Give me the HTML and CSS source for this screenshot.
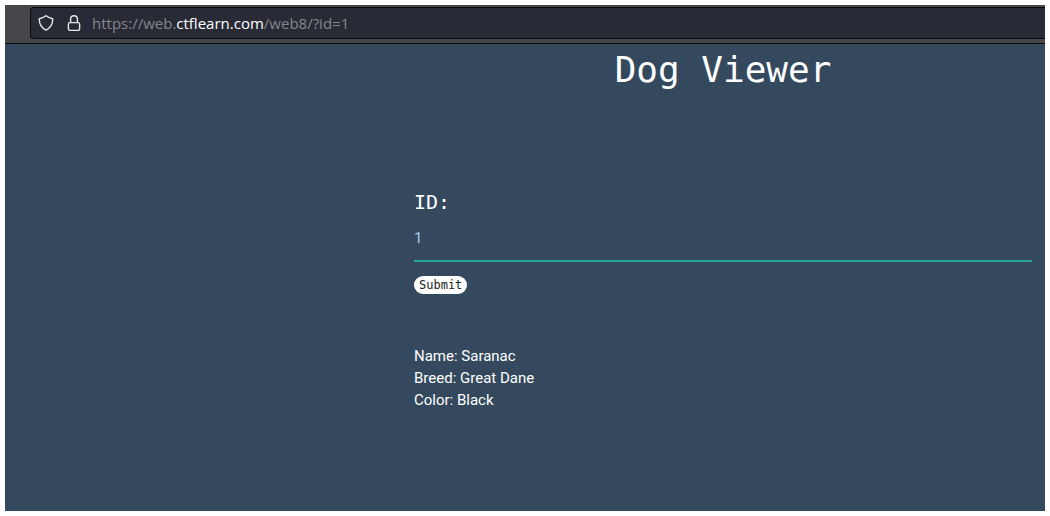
FILE: index.html
```
<!DOCTYPE html>
<html lang="en">
<head>
<meta charset="utf-8">
<title>Dog Viewer</title>
<link rel="stylesheet" href="styles.css">
</head>
<body>
<div class="window">
  <header class="toolbar">
    <div class="address-bar">
      <svg class="icon" viewBox="0 0 16 16" aria-hidden="true"><path d="M8 0.8C6.2 2.1 3.8 3.3 1.3 3.7C1.1 8.9 3.3 12.8 8 15.2C12.7 12.8 14.9 8.9 14.7 3.7C12.2 3.3 9.8 2.1 8 0.8Z"/></svg>
      <svg class="icon" viewBox="0 0 16 16" aria-hidden="true"><rect x="2.4" y="7.6" width="11.2" height="7.8" rx="1.6"/><path d="M4.6 7.6V4.1a3.4 3.4 0 0 1 6.8 0V7.6"/></svg>
      <div class="url">https://web.<span class="domain">ctflearn.com</span>/web8/?id=1</div>
    </div>
  </header>
  <main class="page">
    <div class="content">
      <h1 class="title">Dog Viewer</h1>
      <form class="form">
        <label class="label" for="dog-id">ID:</label>
        <input class="field" id="dog-id" name="id" type="text" value="1">
        <button class="submit" type="submit">Submit</button>
      </form>
      <div class="result">
        <div>Name: Saranac</div>
        <div>Breed: Great Dane</div>
        <div>Color: Black</div>
      </div>
    </div>
  </main>
</div>
</body>
</html>
```
FILE: styles.css
```
* {
  box-sizing: border-box;
}

body {
  margin: 0;
  padding: 5px;
  background: #fff;
  font-family: Roboto, sans-serif;
}

.window {
  display: flex;
  flex-direction: column;
  min-height: calc(100vh - 10px);
  background: #34495e;
  color: #fff;
}

.toolbar {
  padding: 2px 0 4px 25px;
  background: #45474c;
  border-bottom: 1px solid #0c0c0d;
}

.address-bar {
  display: flex;
  align-items: center;
  gap: 12px;
  height: 32px;
  padding-left: 7px;
  background: #282a36;
  border: 1px solid #0c0c0d;
  border-right: 0;
  border-radius: 4px 0 0 4px;
}

.icon {
  flex: none;
  width: 16px;
  height: 16px;
  fill: none;
  stroke: #e6e6e8;
  stroke-width: 1.4;
  stroke-linejoin: round;
}

.url {
  color: #85868b;
  font: 15px/20px "Open Sans", "Noto Sans", sans-serif;
  margin-left: -2px;
}

.domain {
  color: #fff;
}

.page {
  display: grid;
  grid-template-columns: 409fr 618fr;
  padding-right: 13px;
}

.content {
  grid-column: 2;
}

.title {
  margin: 0;
  padding-bottom: 94px;
  font: 400 36px/52px "DejaVu Sans Mono", monospace;
  text-align: center;
}

.form {
  display: flex;
  flex-direction: column;
  align-items: flex-start;
}

.label {
  padding-bottom: 2px;
  font: 20px/24px "DejaVu Sans Mono", monospace;
}

.field {
  width: 100%;
  height: 46px;
  padding: 0;
  background: transparent;
  border: 0;
  border-bottom: 2px solid #2ba599;
  outline: 0;
  color: #a9cbe6;
  font: 15px/20px Roboto, sans-serif;
}

.submit {
  height: 18px;
  margin-top: 14px;
  padding: 0 5px;
  background: #fff;
  border: 0;
  border-radius: 9px;
  color: #222;
  font: 12px/18px "DejaVu Sans Mono", monospace;
}

.result {
  padding-top: 51px;
  font-size: 15px;
  line-height: 22px;
}
```
